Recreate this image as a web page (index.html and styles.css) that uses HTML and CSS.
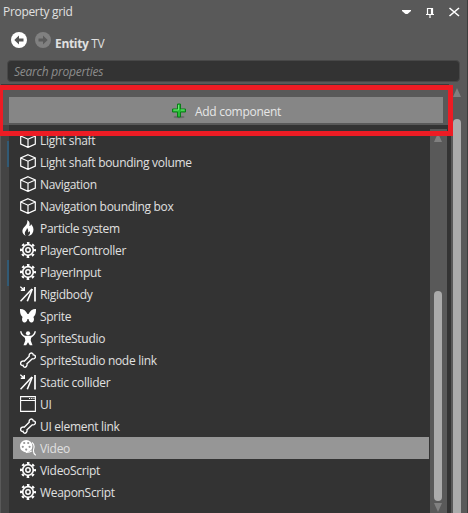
FILE: index.html
```html
<!DOCTYPE html>
<html lang="en">
<head>
<meta charset="utf-8">
<title>Property grid</title>
<link rel="stylesheet" href="styles.css">
</head>
<body>
<svg class="defs" aria-hidden="true">
  <symbol id="cube" viewBox="0 0 16 16"><path d="M8 .7 15.3 4v8L8 15.4.7 12V4ZM.7 4 8 7.2 15.3 4M8 7.2v8.2" fill="none" stroke="currentColor" stroke-width="1.2"/></symbol>
  <symbol id="flame" viewBox="0 0 16 16"><path d="M7.2 0C10 1.7 9.900 4 9.300 6c1 .1 1.600-.8 1.700-2 2 2.300 3 4.700 2.200 7.500C12.500 14.300 10.500 15.700 8 16c2-1.400 2.500-3.300 1.700-5-.5 1-.9 1.300-1.500 1.300C8.500 10.500 7.900 9 7 8c.1 1.800-2.200 3-2.200 5 0 1.300.5 2.200 1.300 3C3.600 15 2.100 13 2.400 10.500 2.800 7.600 5 6.900 6.400 4.500 7.200 3.100 7.500 1.600 7.200 0Z" fill="currentColor"/></symbol>
  <symbol id="gear" viewBox="0 0 16 16"><g fill="none" stroke="currentColor"><circle cx="8" cy="8" r="5.300" stroke-width="1.700"/><circle cx="8" cy="8" r="2.200" stroke-width="1.500"/><circle cx="8" cy="8" r="7" stroke-width="2" stroke-dasharray="2.600 2.898" stroke-dashoffset="1.300"/></g></symbol>
  <symbol id="collide" viewBox="0 0 16 16"><g fill="none" stroke="currentColor"><path d="M15 1v14.500" stroke-width="1.700"/><path d="M.5 15.300 12 3" stroke-width="1.600"/><path d="M7.300 15.300 12.300 3" stroke-width="1.600"/><path d="m.3.7 3.500 3M4.300 1v3.300H.8" stroke-width="1.400"/></g></symbol>
  <symbol id="butterfly" viewBox="0 0 16 16"><path d="M0 1c3-.3 6 1.500 7.500 5h1C10 2.500 13 .7 16 1c.1 3-.3 6.500-2.600 8 1 1.700.8 4.500-1.400 5.500-1.900.4-3-1.100-3.500-3.500h-1c-.5 2.400-1.600 3.900-3.500 3.500C1.800 13.500 1.600 10.700 2.600 9 .3 7.500-.1 4 0 1Z" fill="currentColor"/></symbol>
  <symbol id="person" viewBox="0 0 16 16"><circle cx="8" cy="3.300" r="2.100" fill="currentColor"/><path d="M.8 1.300C1 4 2.800 5.700 5.200 7M15.200 1.300C15 4 13.200 5.700 10.800 7" fill="none" stroke="currentColor" stroke-width="1.500"/><path d="M4.500 5.800h7l-.8 4.700 1.800 4.800H9.800L8 12.300l-1.800 3H3.500l1.800-4.800Z" fill="currentColor"/></symbol>
  <symbol id="bone" viewBox="0 0 16 16"><path d="m4.200 9.200 5-5C8.700 2 11 .3 12.600 1.500c.5.4.6.9.6 1.400.7 0 1.500.2 1.900.8 1 1.800-.7 3.700-2.800 3.100l-5.300 5c.5 2.100-1.300 4-3 3.200-.6-.3-.9-.9-.9-1.600C1.700 13.600.6 12.700.6 11.500.6 9.600 2.500 8.500 4.200 9.200Z" fill="none" stroke="currentColor" stroke-width="1.350"/></symbol>
  <symbol id="window" viewBox="0 0 16 16"><path d="M.6.600h14.800v14.800H.6ZM.6 4.500h14.800" fill="none" stroke="currentColor" stroke-width="1.100"/><path d="M9 2.500h1.200m1 0h1.200m1 0h1.100" stroke="currentColor"/></symbol>
  <symbol id="reel" viewBox="0 0 16 16"><path fill-rule="evenodd" fill="currentColor" d="M6.200 0a6.200 6.200 0 1 1 0 12.400A6.200 6.200 0 0 1 6.200 0ZM4.200 1.900a1.100 1.100 0 1 0 0 2.200 1.100 1.100 0 0 0 0-2.200Zm4 0a1.100 1.100 0 1 0 0 2.200 1.100 1.100 0 0 0 0-2.200ZM2.800 5.700a1.100 1.100 0 1 0 0 2.200 1.100 1.100 0 0 0 0-2.200Zm6.800 0a1.100 1.100 0 1 0 0 2.200 1.100 1.100 0 0 0 0-2.200ZM6.200 8.500a1.100 1.100 0 1 0 0 2.200 1.100 1.100 0 0 0 0-2.200Z"/><path d="M6 12.400c2.500 0 4.500-.2 6-1.600M12 2.500c2.200 1.500 2.500 3.700 1.700 6.300-.7 2.800-.1 5 2 6.500" fill="none" stroke="currentColor" stroke-width="1.100"/></symbol>
</svg>
<div class="panel">
  <header class="titlebar">
    <span class="title">Property grid</span>
    <svg class="controls" viewBox="0 0 58 12"><path d="M0 4h9v1L5.500 8h-2L0 5Z" fill="#fff"/><path d="M25.500 8V2.500h5V8M24 8.500h8M28 9v3M29.500 2v6" fill="none" stroke="#fff" stroke-width="1.200"/><path d="m47.500 2 9.500 8M57 2l-9.500 8" stroke="#fff" stroke-width="1.600"/></svg>
  </header>
  <div class="nav">
    <svg class="arrows" viewBox="0 0 40 16"><circle cx="8" cy="8" r="8" fill="#fff"/><path d="M3.300 8 8 3.600v2.900h4.500v3H8v2.900Z" fill="#555"/><circle cx="32" cy="8" r="8" fill="#808080"/><path d="M36.700 8 32 3.600v2.900h-4.500v3H32v2.900Z" fill="#5b5b5b"/></svg>
    <span class="crumb"><b>Entity</b> TV</span>
  </div>
  <div class="search">Search properties</div>
  <div class="rule"></div>
  <main class="content">
    <div class="left">
      <button class="add"><svg class="plus" viewBox="0 0 16 16"><ellipse cx="8" cy="14" rx="5.500" ry="1.200" fill="#555" opacity=".55"/><path d="M6.500 1h3v5h5v3h-5v5h-3V9h-5V6h5Z" fill="#26bd35" stroke="#087d17"/><path d="M7.500 2v5h-5M10 7h3.500" fill="none" stroke="#6be873"/></svg><span>Add component</span></button>
      <div class="popup">
        <ul class="list">
          <li><svg><use href="#cube"/></svg><span>Light shaft</span></li>
          <li><svg><use href="#cube"/></svg><span>Light shaft bounding volume</span></li>
          <li><svg><use href="#cube"/></svg><span>Navigation</span></li>
          <li><svg><use href="#cube"/></svg><span>Navigation bounding box</span></li>
          <li><svg><use href="#flame"/></svg><span>Particle system</span></li>
          <li><svg><use href="#gear"/></svg><span>PlayerController</span></li>
          <li><svg><use href="#gear"/></svg><span>PlayerInput</span></li>
          <li><svg><use href="#collide"/></svg><span>Rigidbody</span></li>
          <li><svg><use href="#butterfly"/></svg><span>Sprite</span></li>
          <li><svg><use href="#person"/></svg><span>SpriteStudio</span></li>
          <li><svg><use href="#bone"/></svg><span>SpriteStudio node link</span></li>
          <li><svg><use href="#collide"/></svg><span>Static collider</span></li>
          <li><svg><use href="#window"/></svg><span>UI</span></li>
          <li><svg><use href="#bone"/></svg><span>UI element link</span></li>
          <li class="selected"><svg><use href="#reel"/></svg><span>Video</span></li>
          <li><svg><use href="#gear"/></svg><span>VideoScript</span></li>
          <li><svg><use href="#gear"/></svg><span>WeaponScript</span></li>
        </ul>
        <div class="scroll inner"><i class="up"></i><i class="thumb"></i><i class="down"></i></div>
      </div>
    </div>
    <div class="scroll outer"><i class="up"></i><i class="thumb"></i></div>
  </main>
  <div class="highlight"></div>
  <div class="mark first"></div>
  <div class="mark second"></div>
</div>
</body>
</html>
```
FILE: styles.css
```css
* { box-sizing: border-box; }
body { margin: 0; background: #595959; color: #e0e0e0; font: 12px/16px "Open Sans", "Noto Sans", sans-serif; }
.defs { position: absolute; width: 0; height: 0; }
.panel { position: relative; display: flex; flex-direction: column; width: 468px; height: 513px; overflow: hidden; background: #595959; border-right: 1px solid #3d3d3d; }
.titlebar { display: flex; justify-content: space-between; height: 25px; padding: 4px 8px 0 3px; }
.title { letter-spacing: -.31px; }
.controls { width: 58px; height: 12px; margin: 2px -1px 0 0; }
.nav { display: flex; height: 35px; padding: 7px 0 0 11px; }
.arrows { width: 40px; height: 16px; }
.crumb { margin: 4px 0 0 4px; letter-spacing: -.33px; }
.search { flex: none; height: 22px; width: 453px; margin-left: 7px; padding: 3px 6px 1px; border: 1px solid #484848; border-radius: 4px; background: #333; color: #8c8c8c; font-style: italic; letter-spacing: -.24px; }
.rule { flex: none; height: 2px; width: 448px; margin: 2px 0 0 1px; background: #3b3b3b; }
.content { display: flex; flex: 1; min-height: 0; }
.left { display: flex; flex-direction: column; width: 451px; }
.add { display: flex; flex: none; align-items: center; justify-content: center; gap: 8px; width: 434px; height: 26px; margin: 11px 0 2px 9px; padding: 2px 0 0; border: 0; background: #868686; color: #e6e6e6; font: inherit; letter-spacing: -.28px; }
.add span { padding-top: 1px; }
.plus { width: 16px; height: 16px; }
.popup { display: flex; flex: 1; min-height: 0; border-left: 1px solid #595959; padding-left: 8px; background: linear-gradient(to right, #444 8px, #333 8px); }
.list { width: 421px; margin: 0; padding: 4px 1px 0 4px; list-style: none; letter-spacing: -.3px; }
.list li { display: flex; align-items: center; gap: 4px; height: 22px; padding-left: 7px; white-space: nowrap; }
.list svg { flex: none; width: 16px; height: 16px; color: #fff; }
.list span { padding-top: 2px; }
.list .selected { background: #969696; }
.scroll { display: flex; flex-direction: column; background: #595959; }
.scroll i { flex: none; }
.inner { width: 17px; margin-top: 4px; padding-left: 4px; }
.outer { width: 16px; padding: 2px 0 0 2px; }
.up, .down { width: 8px; height: 9px; background: #808080; clip-path: polygon(50% 0, 100% 100%, 0 100%); }
.down { clip-path: polygon(0 0, 100% 0, 50% 100%); }
.thumb { width: 8px; border-radius: 4px; background: #ababab; }
.inner .up { margin-top: 4px; }
.inner .thumb { height: 210px; margin: 149px 0 2px; }
.outer .thumb { height: 400px; margin-top: 22px; }
.highlight { position: absolute; left: 0; top: 85px; width: 453px; height: 51px; border: 5px solid #ed1c24; border-left-width: 3px; }
.mark { position: absolute; left: 7px; width: 2px; height: 26px; background: #315a75; }
.first { top: 141px; }
.second { top: 260px; }
```
